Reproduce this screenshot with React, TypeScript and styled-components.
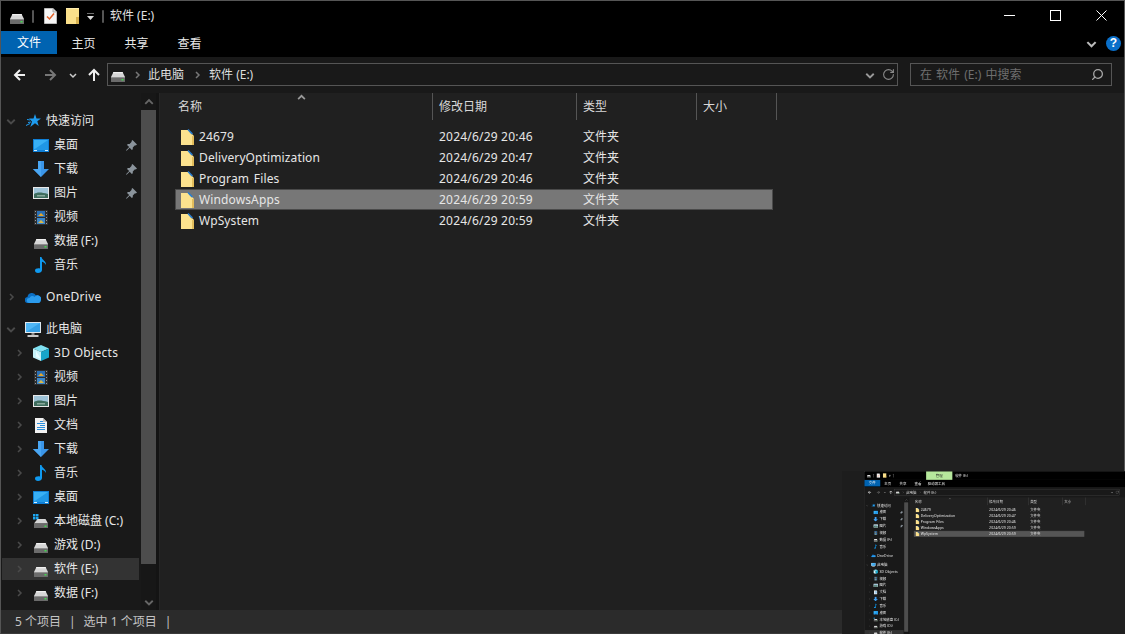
import React from "react";
import styled, { createGlobalStyle } from "styled-components";
import { RotateCw, Search } from "lucide-react";

const Global = createGlobalStyle`
  html, body { margin: 0; padding: 0; background: #202020; }
  #root { width: 1125px; height: 634px; overflow: hidden; position: relative; }
  * { box-sizing: border-box; }
`;

const Screen = styled.div`
  position: relative;
  width: 1125px;
  height: 634px;
  overflow: hidden;
`;
const Win = styled.div`
  width: 1125px;
  height: 634px;
  border: 1px solid #555;
  border-bottom-color: #3a3a3a;
  background: #202020;
  color: #e8e8e8;
  font: 12px/16px "Noto Sans", "Noto Sans CJK SC", sans-serif;
  display: grid;
  grid-template-rows: 30px 26px 36px 517px 23px;
  overflow: hidden;
`;

/* Title bar */
const TitleBar = styled.div`
  background: #000;
  display: flex;
  align-items: center;
  padding-left: 9px;
  position: relative;
`;
const TitleSep = styled.span<{ $ml: number }>`
  width: 2px;
  height: 13px;
  margin-left: ${(p) => p.$ml}px;
  background: #555;
  border-radius: 1px;
`;
const QuickSlot = styled.span<{ $ml: number; $mt?: number }>`
  display: flex;
  margin-left: ${(p) => p.$ml}px;
  margin-top: ${(p) => p.$mt ?? 0}px;
`;
const TitleText = styled.span<{ $ml: number }>`
  margin-left: ${(p) => p.$ml}px;
  color: #e0e0e0;
`;
const ContextTab = styled.span`
  margin-left: 114px;
  width: 92px;
  height: 30px;
  background: #b6e89c;
  color: #222;
  display: flex;
  align-items: center;
  justify-content: center;
`;
const WinControls = styled.div`
  margin-left: auto;
  display: flex;
  height: 30px;
  padding-bottom: 2px;
`;
const WinBtn = styled.span`
  width: 46px;
  display: flex;
  align-items: center;
  justify-content: center;
`;

/* Ribbon */
const Ribbon = styled.div`
  background: #000;
  display: flex;
  align-items: flex-start;
`;
const FileTab = styled.span`
  width: 56px;
  height: 23px;
  background: #0063b1;
  color: #fff;
  display: flex;
  align-items: center;
  justify-content: center;
`;
const RibbonTab = styled.span`
  width: 53px;
  height: 25px;
  color: #e8e8e8;
  display: flex;
  align-items: center;
  justify-content: center;
`;
const RibbonWideTab = styled(RibbonTab)`
  width: 76px;
`;
const RibbonRight = styled.div`
  margin-left: auto;
  display: flex;
  align-items: center;
  gap: 9px;
  height: 25px;
  padding-right: 3px;
`;
const HelpDot = styled.span`
  width: 15px;
  height: 15px;
  border-radius: 50%;
  background: #0a6fc9;
  color: #fff;
  font: bold 12px/15px "Liberation Sans", sans-serif;
  text-align: center;
`;

/* Address row */
const AddressRow = styled.div`
  background: #191919;
  display: flex;
  align-items: flex-start;
  padding: 6px 12px 0 4px;
`;
const NavBtn = styled.span<{ $w: number }>`
  width: ${(p) => p.$w}px;
  height: 23px;
  display: flex;
  align-items: center;
  justify-content: center;
`;
const AddressBox = styled.div`
  width: 791px;
  height: 23px;
  border: 1px solid #555;
  background: #191919;
  display: flex;
  align-items: center;
  padding-left: 3px;
  color: #dcdcdc;
`;
const CrumbSep = styled.span<{ $w: number }>`
  width: ${(p) => p.$w}px;
  display: flex;
  justify-content: center;
`;
const AddressEnd = styled.div`
  margin-left: auto;
  display: flex;
  align-items: center;
  gap: 7px;
  padding-right: 2px;
`;
const SearchBox = styled.div`
  width: 202px;
  height: 23px;
  margin-left: 12px;
  border: 1px solid #555;
  display: flex;
  align-items: center;
  justify-content: space-between;
  padding: 0 7px 0 9px;
  color: #6e6e6e;
  word-spacing: 1px;
`;
const FlipSearch = styled(Search)`
  transform: scaleX(-1);
`;

/* Body */
const Body = styled.div`
  display: grid;
  grid-template-columns: 140px 15px 4px 1fr;
  min-height: 0;
`;
const Nav = styled.nav`
  background: #191919;
  padding-top: 16px;
  overflow: hidden;
`;
const NavGroup = styled.div`
  display: flex;
  flex-direction: column;
  margin-bottom: 8px;
`;
const NavRow = styled.div<{ $level: number; $active?: boolean }>`
  flex: none;
  height: 22px;
  margin: 1px 2px 1px 1px;
  padding-left: ${(p) => 3 + p.$level * 8}px;
  display: flex;
  align-items: center;
  background: ${(p) => (p.$active ? "#333" : "transparent")};
  color: #e8e8e8;
  white-space: nowrap;
  letter-spacing: 0.1px;
`;
const TreeToggle = styled.span`
  width: 12px;
  margin-right: 8px;
  display: flex;
  justify-content: center;
`;
const NavIcon = styled.span<{ $drop?: number }>`
  width: 16px;
  height: 16px;
  margin-right: 5px;
  display: flex;
  align-items: center;
  justify-content: center;
  padding-top: ${(p) => p.$drop ?? 0}px;
`;
const RowLabel = styled.span<{ $latin?: boolean }>`
  letter-spacing: ${(p) => (p.$latin ? "0.3px" : "0")};
`;
const PinSlot = styled.span`
  margin-left: auto;
  margin-right: 2px;
  display: flex;
`;
const ScrollBar = styled.div`
  background: #171717;
  display: flex;
  flex-direction: column;
  align-items: center;
`;
const ScrollArrow = styled.span`
  height: 17px;
  display: flex;
  align-items: center;
`;
const ScrollThumb = styled.span`
  width: 15px;
  height: 454px;
  background: #4d4d4d;
`;
const ScrollFill = styled.span`
  flex: 1;
`;
const Divider = styled.div`
  background: #141414;
  border-right: 1px solid #262626;
`;

/* List */
const Main = styled.main`
  background: #202020;
  padding-left: 12px;
`;
const HeaderRow = styled.div`
  display: grid;
  grid-template-columns: 261px 144px 120px 80px;
  height: 27px;
  margin-bottom: 6px;
  position: relative;
`;
const HeaderCell = styled.div`
  border-right: 1px solid #555;
  padding: 1px 0 0 6px;
  display: flex;
  align-items: center;
  color: #d8d8d8;
`;
const SortCaret = styled.span`
  position: absolute;
  left: 125px;
  top: 0;
  display: flex;
`;
const FileRow = styled.div<{ $selected?: boolean; $dim?: boolean }>`
  display: grid;
  grid-template-columns: 258px 144px 120px 76px;
  width: 598px;
  height: 21px;
  margin-left: 3px;
  align-items: center;
  color: #e6e6e6;
  background: ${(p) => (p.$selected ? (p.$dim ? "#555" : "#777") : "transparent")};
  box-shadow: ${(p) => (p.$selected ? "inset 0 0 0 1px #4a4a4a" : "none")};
`;
const FileName = styled.div`
  display: flex;
  align-items: center;
  gap: 5px;
  padding-left: 6px;
  letter-spacing: 0.12px;
  word-spacing: 1.5px;
`;
const FileCell = styled.div`
  padding-left: 6px;
`;
const DateCell = styled(FileCell)`
  letter-spacing: 0.2px;
`;

/* Status */
const StatusBar = styled.footer`
  background: #2b2b2b;
  color: #c4c4c4;
  display: flex;
  align-items: center;
  padding-left: 14px;
  gap: 8px;
`;

/* Thumbnail over the window */
const Thumbnail = styled.div`
  position: absolute;
  left: 842px;
  top: 471px;
  width: 283px;
  height: 163px;
  background: #1d1d1d;
  padding-left: 22px;
  overflow: hidden;
`;
const ThumbScale = styled.div`
  width: 1125px;
  height: 634px;
  transform: scale(0.285);
  transform-origin: 0 0;
  filter: blur(0.6px);
`;

/* Icons */
const Chevron = ({ dir = "right", color = "#4a4a4a", size = 8 }: { dir?: "right" | "down" | "up"; color?: string; size?: number }) => {
  const pts = dir === "right" ? "3,1 6,4 3,7" : dir === "down" ? "1,3 4,6 7,3" : "1,5.5 4,2.5 7,5.5";
  return (
    <svg width={size} height={size} viewBox="0 0 8 8">
      <polyline points={pts} fill="none" stroke={color} strokeWidth="1.5" />
    </svg>
  );
};
const Drive = ({ w = 14 }: { w?: number }) => (
  <svg width={w} height={(w * 10) / 14} viewBox="0 0 14 10">
    <path d="M2.5 0h9L14 5H0z" fill="#d6d6d6" />
    <path d="M2.5 0h9l.6 1.2H1.9z" fill="#f0f0f0" />
    <rect x="0" y="5" width="14" height="5" rx="0.5" fill="#6b6b6b" />
    <rect x="0" y="5" width="14" height="1" fill="#8f8f8f" />
    <rect x="10.5" y="7" width="2" height="1.5" fill="#41d84f" />
  </svg>
);
const SysDrive = () => (
  <svg width="16" height="16" viewBox="0 0 16 16">
    <rect x="0" y="1" width="2.5" height="2.5" fill="#1ea7f0" />
    <rect x="3" y="1" width="2.5" height="2.5" fill="#1ea7f0" />
    <rect x="0" y="4" width="2.5" height="2.5" fill="#1ea7f0" />
    <rect x="3" y="4" width="2.5" height="2.5" fill="#1ea7f0" />
    <path d="M4.500 6h8L15 10.500H1z" fill="#d6d6d6" />
    <rect x="1" y="10.500" width="14" height="4.500" fill="#6b6b6b" />
    <rect x="11.500" y="12.500" width="2" height="1.500" fill="#41d84f" />
  </svg>
);
const Checklist = () => (
  <svg width="13" height="16" viewBox="0 0 13 16">
    <path d="M0.500 0.500h8.500l3.500 3.500v11.500h-12z" fill="#f6f6f6" stroke="#bbb" />
    <path d="M9 .5v3.500h3.500" fill="#ddd" stroke="#aaa" />
    <polyline points="3,8.500 5.500,11 10,5.500" fill="none" stroke="#e2622a" strokeWidth="1.500" />
  </svg>
);
const TitleFolder = () => (
  <svg width="13" height="16" viewBox="0 0 13 16">
    <rect width="13" height="16" fill="#fbe08a" />
    <rect x="10" y="9" width="3" height="7" fill="#d9b24f" />
    <rect x="0" y="0" width="13" height="1" fill="#ffeeb0" />
  </svg>
);
const RowFolder = () => (
  <svg width="13" height="16" viewBox="0 0 13 16">
    <path d="M0 1h7l6 6v9H0z" fill="#fce28e" />
    <path d="M11 7h2v9h-2z" fill="#e3bd5c" />
    <path d="M7.500 0l4.500 4.500-1.500 1L6.500 1z" fill="#2a7fd0" />
  </svg>
);
const Star = () => (
  <svg width="16" height="14" viewBox="0 0 16 14">
    <path d="M10 0l1.500 4.500H16l-3.700 2.800 1.400 4.700L10 9.200 5.300 13l1.700-5.600-3-2.900h4.500z" fill="#1e9cf0" />
    <path d="M2 5.500l3 .5M3 8.500l3-.5M1 11.500l4-2" stroke="#1e9cf0" strokeWidth="1" />
  </svg>
);
const Desktop = () => (
  <svg width="16" height="13" viewBox="0 0 16 13">
    <rect width="16" height="13" fill="#0f7fd6" />
    <path d="M1 1h14v9.500H1z" fill="#38b0f5" />
    <path d="M1 10.500L15 1v9.500z" fill="#1f97e6" />
    <rect x="1" y="11" width="3" height="1" fill="#d8f0ff" />
    <rect x="12" y="11" width="3" height="1" fill="#d8f0ff" />
  </svg>
);
const Download = () => (
  <svg width="16" height="16" viewBox="0 0 16 16">
    <path d="M5 0h6v8h5l-8 8-8-8h5z" fill="#3a95e8" />
    <path d="M5 0h3v16l-8-8h5z" fill="#4aa6f2" />
  </svg>
);
const Picture = () => (
  <svg width="16" height="12" viewBox="0 0 16 12">
    <rect width="16" height="12" fill="#e8e8e8" />
    <rect x="1" y="1" width="14" height="10" fill="#9fc4d8" />
    <path d="M1 7c3-2 7-2 14 0v4H1z" fill="#3f6d5e" />
    <path d="M4 8h8v1.500H4z" fill="#86a89a" />
  </svg>
);
const Video = () => (
  <svg width="14" height="15" viewBox="0 0 14 15">
    <rect width="14" height="15" fill="#2e2e2e" />
    <rect x="3" y="1" width="8" height="6" fill="#2a6fb5" />
    <rect x="3" y="8" width="8" height="6" fill="#3b86c9" />
    <path d="M4 6l3-3 3 3z" fill="#e6a72a" />
    <path d="M4 13l3-3 3 3z" fill="#d9b84a" />
    <path d="M1 1h1v1H1zM1 4h1v1H1zM1 7h1v1H1zM1 10h1v1H1zM1 13h1v1H1zM12 1h1v1h-1zM12 4h1v1h-1zM12 7h1v1h-1zM12 10h1v1h-1zM12 13h1v1h-1z" fill="#999" />
  </svg>
);
const Music = () => (
  <svg width="12" height="16" viewBox="0 0 12 16">
    <path d="M5 0h1.500c.3 3 5 4 4.500 8-.7-2-3-3-4-3.300V13c0 2-2 3-4 3S0 15 0 13.500 2 11 5 11.500z" fill="#0f9af0" />
  </svg>
);
const Cloud = () => (
  <svg width="16" height="11" viewBox="0 0 16 11">
    <path d="M3 11a3 3 0 0 1-.5-6A4.500 4.500 0 0 1 11 3.500 3.800 3.800 0 0 1 13 11z" fill="#0b6fc4" />
    <path d="M4 11a2.500 2.500 0 0 1 .5-5 3 3 0 0 1 5-1 3 3 0 0 1 6 4c0 1.200-1 2-2 2z" fill="#2b9bec" />
  </svg>
);
const Monitor = () => (
  <svg width="16" height="15" viewBox="0 0 16 15">
    <rect width="16" height="11" fill="#dfe8ee" />
    <rect x="1" y="1" width="14" height="9" fill="#4fb6f5" />
    <path d="M1 10L15 1v9z" fill="#35a0e6" />
    <rect x="6.500" y="11" width="3" height="2" fill="#8a8a8a" />
    <rect x="2.500" y="13" width="11" height="2" fill="#c8c8c8" />
  </svg>
);
const Cube = () => (
  <svg width="16" height="16" viewBox="0 0 16 16">
    <path d="M8 0l8 3.500-8 3.500-8-3.500z" fill="#7fe0f2" />
    <path d="M0 3.500l8 3.500v9l-8-3.500z" fill="#c6f2fa" />
    <path d="M16 3.500L8 7v9l8-3.500z" fill="#17a5c9" />
    <path d="M3 6v6l5 2z" fill="#e6fbff" />
  </svg>
);
const Doc = () => (
  <svg width="12" height="15" viewBox="0 0 12 15">
    <path d="M0 0h8l4 4v11H0z" fill="#f2f2f2" />
    <path d="M8 0v4h4z" fill="#bcbcbc" />
    <path d="M5 3h3v1H5zM2 5h8v1H2zM5 7h5v1H5zM2 9h8v1H2zM2 11h8v1H2z" fill="#2b8fdb" />
  </svg>
);
const Pin = () => (
  <svg width="11" height="11" viewBox="0 0 11 11">
    <path d="M6.500 0L11 4.500 9.800 5.500 9 5.200 6.800 7.400 6.800 9.300 5.800 10 3.700 7.700 .6 10.800 0 10.300 3.200 7.100 1 5l.8-1h1.800L5.700 1.800 5.500 1z" fill="#8b949c" />
  </svg>
);
const Arrow = ({ dir, color }: { dir: "left" | "right" | "up"; color: string }) => {
  const d = dir === "left" ? "M12 7H2M7 2L2 7l5 5" : dir === "right" ? "M2 7h10M7 2l5 5-5 5" : "M7 13V2M2 7l5-5 5 5";
  return (
    <svg width="14" height="14" viewBox="0 0 14 14">
      <path d={d} fill="none" stroke={color} strokeWidth="2" />
    </svg>
  );
};

type NavItem = {
  icon: React.ReactNode;
  label: string;
  pin?: boolean;
  active?: boolean;
  drop?: number;
  latin?: boolean;
  level: number;
  toggle: "none" | "right" | "down";
};

const quick: NavItem[] = [
  { icon: <Star />, label: "快速访问", level: 0, toggle: "down" },
  { icon: <Desktop />, label: "桌面", pin: true, level: 1, toggle: "none" },
  { icon: <Download />, label: "下载", pin: true, level: 1, toggle: "none" },
  { icon: <Picture />, label: "图片", pin: true, level: 1, toggle: "none" },
  { icon: <Video />, label: "视频", level: 1, toggle: "none" },
  { icon: <Drive />, label: "数据 (F:)", level: 1, toggle: "none", drop: 5 },
  { icon: <Music />, label: "音乐", level: 1, toggle: "none" },
];
const cloud: NavItem[] = [{ icon: <Cloud />, label: "OneDrive", level: 0, toggle: "right", latin: true }];
const pc: NavItem[] = [
  { icon: <Monitor />, label: "此电脑", level: 0, toggle: "down" },
  { icon: <Cube />, label: "3D Objects", level: 1, toggle: "right", latin: true },
  { icon: <Video />, label: "视频", level: 1, toggle: "right" },
  { icon: <Picture />, label: "图片", level: 1, toggle: "right" },
  { icon: <Doc />, label: "文档", level: 1, toggle: "right" },
  { icon: <Download />, label: "下载", level: 1, toggle: "right" },
  { icon: <Music />, label: "音乐", level: 1, toggle: "right" },
  { icon: <Desktop />, label: "桌面", level: 1, toggle: "right" },
  { icon: <SysDrive />, label: "本地磁盘 (C:)", level: 1, toggle: "right" },
  { icon: <Drive />, label: "游戏 (D:)", level: 1, toggle: "right", drop: 5 },
  { icon: <Drive />, label: "软件 (E:)", level: 1, toggle: "right", active: true, drop: 5 },
  { icon: <Drive />, label: "数据 (F:)", level: 1, toggle: "right", drop: 5 },
];
const files = [
  { name: "24679", date: "2024/6/29 20:46" },
  { name: "DeliveryOptimization", date: "2024/6/29 20:47" },
  { name: "Program Files", date: "2024/6/29 20:46" },
  { name: "WindowsApps", date: "2024/6/29 20:59" },
  { name: "WpSystem", date: "2024/6/29 20:59" },
];

const NavList = ({ items }: { items: NavItem[] }) => (
  <NavGroup>
    {items.map((it, i) => (
      <NavRow key={i} $level={it.level} $active={it.active}>
        <TreeToggle>{it.toggle !== "none" && <Chevron dir={it.toggle} size={it.toggle === "down" ? 10 : 8} />}</TreeToggle>
        <NavIcon $drop={it.drop}>{it.icon}</NavIcon>
        <RowLabel $latin={it.latin}>{it.label}</RowLabel>
        {it.pin && (
          <PinSlot>
            <Pin />
          </PinSlot>
        )}
      </NavRow>
    ))}
  </NavGroup>
);

const Explorer = ({ mini = false, selected }: { mini?: boolean; selected: string }) => (
  <Win>
    <TitleBar>
      <QuickSlot $ml={0} $mt={5}>
        <Drive />
      </QuickSlot>
      <TitleSep $ml={8} />
      <QuickSlot $ml={10}>
        <Checklist />
      </QuickSlot>
      <QuickSlot $ml={9}>
        <TitleFolder />
      </QuickSlot>
      <QuickSlot $ml={7} $mt={2}>
        <svg width="9" height="8" viewBox="0 0 9 8">
          <path d="M1 0h7" stroke="#ddd" />
          <path d="M1 3h7L4.500 7z" fill="#ddd" />
        </svg>
      </QuickSlot>
      <TitleSep $ml={7} />
      {mini && <ContextTab>管理</ContextTab>}
      <TitleText $ml={mini ? 10 : 6}>软件 (E:)</TitleText>
      {!mini && (
        <WinControls>
          <WinBtn>
            <svg width="11" height="11" viewBox="0 0 11 11">
              <path d="M0 5.500h11" stroke="#fff" />
            </svg>
          </WinBtn>
          <WinBtn>
            <svg width="11" height="11" viewBox="0 0 11 11">
              <rect x="0.500" y="0.500" width="10" height="10" fill="none" stroke="#fff" />
            </svg>
          </WinBtn>
          <WinBtn>
            <svg width="11" height="11" viewBox="0 0 11 11">
              <path d="M.5.500l10 10M10.500.500l-10 10" stroke="#fff" />
            </svg>
          </WinBtn>
        </WinControls>
      )}
    </TitleBar>
    <Ribbon>
      <FileTab>文件</FileTab>
      <RibbonTab>主页</RibbonTab>
      <RibbonTab>共享</RibbonTab>
      <RibbonTab>查看</RibbonTab>
      {mini && <RibbonWideTab>驱动器工具</RibbonWideTab>}
      {!mini && (
        <RibbonRight>
          <Chevron dir="down" color="#bbb" size={11} />
          <HelpDot>?</HelpDot>
        </RibbonRight>
      )}
    </Ribbon>
    <AddressRow>
      <NavBtn $w={30}>
        <Arrow dir="left" color="#f0f0f0" />
      </NavBtn>
      <NavBtn $w={30}>
        <Arrow dir="right" color="#777" />
      </NavBtn>
      <NavBtn $w={16}>
        <Chevron dir="down" color="#ccc" size={8} />
      </NavBtn>
      <NavBtn $w={26}>
        <Arrow dir="up" color="#f0f0f0" />
      </NavBtn>
      <AddressBox>
        <QuickSlot $ml={0} $mt={4}>
          <Drive />
        </QuickSlot>
        <CrumbSep $w={23}>
          <Chevron color="#777" />
        </CrumbSep>
        此电脑
        <CrumbSep $w={25}>
          <Chevron color="#777" />
        </CrumbSep>
        软件 (E:)
        <AddressEnd>
          <Chevron dir="down" color="#999" size={10} />
          <RotateCw size={13} color="#8a8a8a" strokeWidth={2} />
        </AddressEnd>
      </AddressBox>
      {!mini && (
        <SearchBox>
          在 软件 (E:) 中搜索
          <FlipSearch size={13} color="#a8a8a8" strokeWidth={2.4} />
        </SearchBox>
      )}
    </AddressRow>
    <Body>
      <Nav>
        <NavList items={quick} />
        <NavList items={cloud} />
        <NavList items={mini ? pc.slice(0, 11) : pc} />
      </Nav>
      <ScrollBar>
        <ScrollArrow>
          <Chevron dir="up" color="#666" size={10} />
        </ScrollArrow>
        <ScrollThumb />
        <ScrollFill />
        <ScrollArrow>
          <Chevron dir="down" color="#666" size={10} />
        </ScrollArrow>
      </ScrollBar>
      <Divider />
      <Main>
        <HeaderRow>
          <HeaderCell>名称</HeaderCell>
          <HeaderCell>修改日期</HeaderCell>
          <HeaderCell>类型</HeaderCell>
          <HeaderCell>大小</HeaderCell>
          <SortCaret>
            <Chevron dir="up" color="#9a9a9a" size={9} />
          </SortCaret>
        </HeaderRow>
        {files.map((f) => (
          <FileRow key={f.name} $selected={f.name === selected} $dim={mini}>
            <FileName>
              <RowFolder />
              {f.name}
            </FileName>
            <DateCell>{f.date}</DateCell>
            <FileCell>文件夹</FileCell>
            <FileCell />
          </FileRow>
        ))}
      </Main>
    </Body>
    {mini ? (
      <StatusBar />
    ) : (
      <StatusBar>
        <span>5 个项目</span>
        <span>|</span>
        <span>选中 1 个项目</span>
        <span>|</span>
      </StatusBar>
    )}
  </Win>
);

export default function App() {
  return (
    <Screen>
      <Global />
      <Explorer selected="WindowsApps" />
      <Thumbnail>
        <ThumbScale>
          <Explorer mini selected="WpSystem" />
        </ThumbScale>
      </Thumbnail>
    </Screen>
  );
}
